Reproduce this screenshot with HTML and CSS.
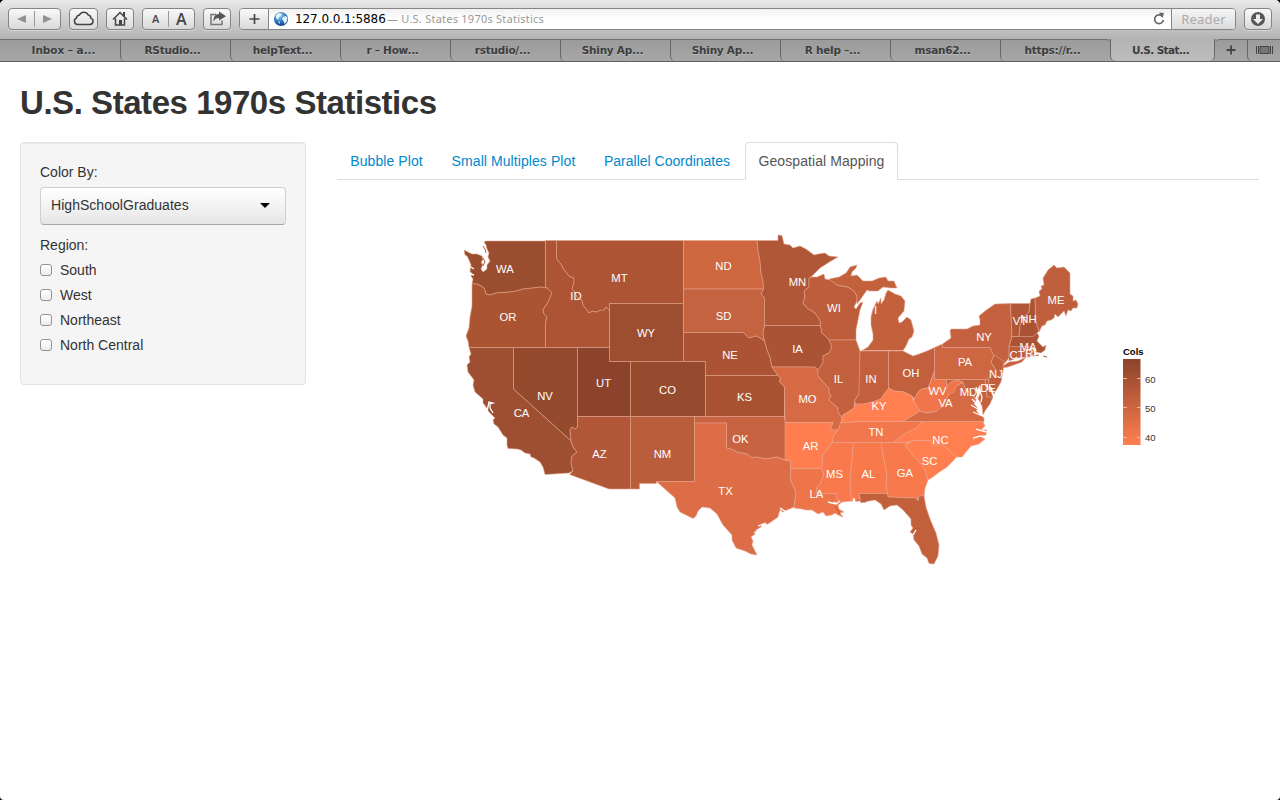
FILE: index.html
```html
<!DOCTYPE html>
<html lang="en">
<head>
<meta charset="utf-8">
<title>U.S. States 1970s Statistics</title>
<link rel="stylesheet" href="styles.css">
</head>
<body>
<div class="window">
  <header class="toolbar">
    <div class="btn nav-btns"><svg width="53" height="22"><path class="dim" d="M9 11l9-4v8zM44 11l-9-4v8z"/><path class="split" d="M26.5 3v16"/></svg></div>
    <div class="btn cloud"><svg width="29" height="22"><path class="line" d="M8.500 16.500H21a3.300 3.300 0 0 0 .8-6.400 3 3 0 0 0-2.600-3.100A4.900 4.900 0 0 0 10.300 7.200 3 3 0 0 0 7.500 10a3.400 3.400 0 0 0 1 6.500z"/></svg></div>
    <div class="btn home"><svg width="28" height="22"><path class="line" d="M7 11.500L14 4.500l7 7M9.500 10.500v6.500h9v-6.500"/><path class="solid" d="M17 4h2v5l-2-2zM13 12h3v5h-3z"/></svg></div>
    <div class="btn sizes"><span class="small-a">A</span><span class="big-a">A</span></div>
    <div class="btn share"><svg width="28" height="22"><path class="line soft" d="M13 6.500H8v10h11v-4"/><path class="solid soft-fill" d="M16 3.500l7 4.700-7 4.300V10c-3 0-4 1-5.500 3.500C10.500 9 12 6 16 6z"/></svg></div>
    <div class="address">
      <div class="add"><svg width="29" height="20"><path d="M14.500 5v10M9.500 10h10" stroke="#444" stroke-width="1.700"/></svg></div>
      <svg class="globe" width="16" height="16" viewBox="0 0 16 16"><defs><radialGradient id="g" cx=".4" cy=".25" r=".8"><stop offset="0" stop-color="#9bcdf2"/><stop offset=".6" stop-color="#2673bd"/><stop offset="1" stop-color="#103e78"/></radialGradient></defs><circle cx="8" cy="8" r="7" fill="url(#g)"/><path d="M3 4l3-2 3 1-1 2-2 1-1 3-2-2zM10 6l3-1 1.500 2-1 4-2 2-1-3-1.500-2zM5 10l2 1-.5 2z" fill="#e3f3fb"/></svg>
      <span class="url">127.0.0.1:5886</span><span class="page-name">— U.S. States 1970s Statistics</span>
      <svg class="reload" width="14" height="16"><path d="M10.500 5.500A4.400 4.400 0 1 0 11.400 9" fill="none" stroke="#666" stroke-width="1.700"/><path d="M7 1.500l5 .5-1.500 5z" fill="#666"/></svg>
      <div class="reader">Reader</div>
    </div>
    <div class="btn down"><svg width="28" height="22"><circle cx="14" cy="11" r="7" fill="#575757"/><path d="M12 6.500h4V11h3l-5 5-5-5h3z" fill="#eee"/></svg></div>
  </header>
  <nav class="tabs">
    <div class="tab first">Inbox – a...</div><div class="tab">RStudio...</div><div class="tab">helpText...</div><div class="tab">r – How...</div><div class="tab">rstudio/...</div><div class="tab">Shiny Ap...</div><div class="tab">Shiny Ap...</div><div class="tab">R help –...</div><div class="tab">msan62...</div><div class="tab before">https://r...</div><div class="tab current">U.S. Stat...</div>
    <div class="tab plus"><svg width="12" height="12"><path d="M6 1.500v9M1.500 6h9" stroke="#444" stroke-width="1.800"/></svg></div>
    <div class="tab all"><svg width="17" height="10"><path d="M.5 1v8M16.500 1v8M2.500 1v8M14.500 1v8" stroke="#444"/><path d="M4 1.500h9v7H4z" fill="#777" stroke="#444"/></svg></div>
  </nav>
  <main class="page">
    <h1>U.S. States 1970s Statistics</h1>
    <div class="row">
      <form class="well">
        <label class="caption">Color By:</label>
        <div class="select"><span>HighSchoolGraduates</span><i class="caret"></i></div>
        <label class="caption">Region:</label>
        <label class="check"><i class="box"></i>South</label>
        <label class="check"><i class="box"></i>West</label>
        <label class="check"><i class="box"></i>Northeast</label>
        <label class="check"><i class="box"></i>North Central</label>
      </form>
      <section class="content">
        <ul class="views"><li class="v1">Bubble Plot</li><li class="v2">Small Multiples Plot</li><li class="v3">Parallel Coordinates</li><li class="v4 active">Geospatial Mapping</li></ul>
        <svg class="map" width="922" height="400" viewBox="337 200 922 400">
          <defs><linearGradient id="scale" x1="0" y1="0" x2="0" y2="1"><stop offset="0" stop-color="#8b432b"/><stop offset="1" stop-color="#ff7f50"/></linearGradient></defs>
          <g class="states">
            <path fill="#9a4d2f" d="M464 250L468 252 472 254 477 254 482 256 483 259 481 263 483 264 481 269 483 272 487 269 487 265 490 261 488 257 489 253 487 249 486 245 484 242 486 241H545.5V286L547 288 541 287 533 288 523 289 516 291 510 292 503 292.500 496 293 490 295 486 294 484 288 481 286 477 284 472 284 473 279 471 276 472 273 470 272 471 265 469 260 467 256 465 255Z"/>
            <path fill="#ab5431" d="M472 284L477 284 481 286 484 288 486 294 490 295 496 293 503 292.500 510 292 516 291 523 289 533 288 541 287 547 288 552 293 550 298 547 304 543 310 544 314 547 317 546 321 545.500 325V347.500H469L468 341 466 336 469 328 470 317 472 306Z"/>
            <path fill="#ad5434" d="M545.5 240.500H556.500V258L559 262 561 264 563 268 569 276 574 278 574 283 572 289 575 292 577 297 582 300 583 305 587 310 589 313 592 311 597 312 600 310 604 310 606 307 609.500 310.500V347.500H545.500V325L546 321 547 317 544 314 543 310 547 304 550 298 552 293 547 288 545.500 286Z"/>
            <path fill="#ad5434" d="M556.500 240.500H683.500V303.500H609.500V310.500L606 307 604 310 600 310 597 312 592 311 589 313 587 310 583 305 582 300 577 297 575 292 572 289 574 283 574 278 569 276 563 268 561 264 559 262 556.500 258Z"/>
            <path fill="#9d4e30" d="M609.500 303.500H683.500V361.500H609.500Z"/>
            <path fill="#8b432b" d="M577.500 347.500H609.500V361.500H630.500V416.500H577.500Z"/>
            <path fill="#964b2f" d="M630.500 361.500H705.500V416.500H630.500Z"/>
            <path fill="#934a2d" d="M513.500 347.500H577.500V427L575 429 572 427 570 430 571 441 513.500 389Z"/>
            <path fill="#9e4f31" d="M469 347.500H513.500V389L571 441 573 447 577 452 572 456 571 463 573 471 569 473 545 474.500 543 467 540 462 534 458 531 457 530 454 525 453 521 450 517 449 508 448.500 507 445 507 438 503 435 498 427 494 424 493 420 495 418 489 412 486 407 483 403 483 399 475 392 473 385 474 380 468 372 467 365 470 362 469 357 471 354Z"/>
            <path fill="#b15738" d="M577.500 416.500H630.500V489H609L569.500 474.500 573 471 571 463 572 456 577 452 573 447 571 441 570 430 572 427 575 429 577.500 427Z"/>
            <path fill="#b95d3b" d="M630.500 416.500H694.500V481.500H656.500V483.500H639.500V489H630.500Z"/>
            <path fill="#ce6740" d="M683.500 240.500H757L758 250 760 261 761 273 763 281 763.500 289H683.500Z"/>
            <path fill="#c4633f" d="M683.500 289H763.500L761 294 764.500 298V325L763 333 764.500 341 760 338 756 336 749 338 743 332.500H683.500Z"/>
            <path fill="#ab5334" d="M683.500 332.500H743L749 338 756 336 760 338 764.500 341 767 350 770 357 772 367 778 375.500H705.500V361.500H683.500Z"/>
            <path fill="#a85231" d="M705.500 375.500H778L781 378 779 381 784.500 387V416.500H705.500Z"/>
            <path fill="#c86341" d="M694.500 416.500H784.500L786 430V460L777 457 771 458 765 459 757 457 752 458 747 454 737 452 731 449 726.500 448V423H694.500Z"/>
            <path fill="#dc6d47" d="M694.500 423H726.500V448L731 449 737 452 747 454 752 458 757 457 765 459 771 458 777 457 785 460 790.500 461V480L796 492 794 507 787 510 782 512 781 508 779 513 778 517 768 524 762 524 761 527 756 530 755 534 751 537 753 541 752 545 757 555 751 554 745 551 736 548 732 540 732 535 723 525 717 514 710 508 702 507 698 511 696 516 693 518.500 680 512 677 507 675 498 666 490 656.500 481.500H694.500Z"/>
            <path fill="#b05737" d="M757 240.500H778V235L782 235.500 784 244 790 245 793 248 800 246 806 249 810 252 814 255 818 254 825 253 829 256 838 257 831 261 820 268 811 277 809 278V287L804 291 805 297 803 303 807 308 815 313 820 320 820.500 325.500H764.500V298L761 294 763.500 289 763 281 761 273 760 261 758 250Z"/>
            <path fill="#aa5435" d="M764.500 325.500H820.500L822 333 829 340 831 344 831.500 348 829 353 823 356 823 363 818 370 815 367H772L770 357 767 350 764.500 341 763 333Z"/>
            <path fill="#d66a45" d="M772 367H815L818 370V376L824 383 829 388 829 393 831 395 829 400 838 408 838 412 842 418 841 423 838 430H830L833 422.500H785L784.500 387 779 381 781 378 778 375.500Z"/>
            <path fill="#bd5d3b" d="M811 277L817 277 824 274 825 279 831 280 837 285 848 287 854 291 857 296 857 301 854 307 856 309 860 303 863 302 860 310 858 320 856 330 856 340H829L822 333 820.500 325.500 820 320 815 313 807 308 803 303 805 297 804 291 809 287V278Z"/>
            <path fill="#c3613d" d="M829 279L839 277 846 273 850 267 857 265 856 268 852 272 851 276 857 275 863 281 872 281 879 278 886 277 888 281 894 281 897 288 891 288 883 287 878 291 869 291 867 290 860 300 857 304 857 296 854 291 848 287 837 285Z"/>
            <path fill="#c3613d" d="M888 290L895 294 901 296 905 301 904 311 898 318 899 323 902 322 907 317 911 320 914 331 912 337 909 339 906 346 903 350.500H862L868 347 873 340 873 334 871 325 871 317 873 309 877 301 878 304 881 298 881 304 884 300 886 293Z"/>
            <path fill="#c3613f" d="M829 340H856L860 351V387L859 394 855 400 854 408 848 412 843 415 842 418 838 412 838 408 829 400 831 395 829 393 829 388 824 383 818 376V370L823 363 823 356 829 353 831.500 348 831 344Z"/>
            <path fill="#c2603d" d="M860 351H888.500V389L884 394 881 399 873 402 864 404 855 404 855 400 859 394Z"/>
            <path fill="#c2603d" d="M888.500 351H903L907 353 913 356 919 354 927 351 934.500 347.500V371L930 383 928 388 922 389 919 391 914 399 912 396 904 392 894 391 888.500 388Z"/>
            <path fill="#ff7f50" d="M843 415L848 412 854 408 855 404 864 404 873 402 881 399 884 394 888.500 388 894 391 904 392 912 396 914 402 920 411 903 421.500H854V422.500H841Z"/>
            <path fill="#f3774d" d="M841 422.500H854V421.500H922L916 428 908 432 900 437 894 442.500H832L834 435 838 430Z"/>
            <path fill="#ff7d4f" d="M785 422.500H833L830 430H838L834 435 832 442 827 450 822 456 823 462 821.500 468.500H790.500V461L785 460Z"/>
            <path fill="#ee744a" d="M790.500 468.500H821.500L824 475 820 484 817 487 816 493.500H836.500L837 500 842 502 838 505 839 509 844 512 840 513 843 517 838 515 835 513 832 515 826 516 823 512 818 514 812 510 806 510 802 509 794 508 796 492 790.500 480Z"/>
            <path fill="#f9794d" d="M832 442.500H853.500L851 470 850 480 851.500 501 842 502 837 500 836.500 493.500H816L817 487 820 484 824 475 821.500 468.500 823 462 822 456 827 450 832 442Z"/>
            <path fill="#f7794c" d="M853.500 442.500H881L884 460 887 475 886 483 887.500 493.500H859L860 500 856 502 854 498 851.500 502 850 480 851 470Z"/>
            <path fill="#f7794c" d="M881 442.500H908L905 445 908 449 914 457 921 464 925 470 928 480 925 488 924 497 919 496 918 501 916 498 888 497 887.500 493.500 886 483 887 475 884 460Z"/>
            <path fill="#c2603c" d="M859 493.500H887.500L888 497 916 498 918 501 919 496 924 496 926 507 930 519 936 533 939 545 938 556 934 564 929 563.500 927 558 922 554 919 546 914 540 913 534 910 532 913 528 911 525 911 519 903 510 897 505 890 506 884 510 881 504 875 500 869 501 861 503Z"/>
            <path fill="#ff7f50" d="M905 445L913 440.500H930L933 445H943L956.500 457 952 462 947 467 938 473 933 477 928 480 925 470 921 464 914 457 908 449Z"/>
            <path fill="#ff7f50" d="M922 421.500H983L985 426 981 430 987 430 986 435 980 436 985 439 979 444 971 446 966 452 962 457 956.500 457 943 445H933L930 440.500H913L908 442.500H894L900 437 908 432 916 428Z"/>
            <path fill="#d66a44" d="M903 421.500H984L984 418 978 413 976 410 979 409 974 404 976 400 971 393 966 390 963 382 956 386 949 394 945 402 937 411 926 413 920 411Z"/>
            <path fill="#f0754a" d="M934.500 371V379.500H946.500V386L951 382 957 380 963 382 956 386 954 392 949 394 945 402 942 407 937 411 926 413 920 411 914 402 914 399 919 391 922 389 928 388 930 383Z"/>
            <path fill="#c4613f" d="M946.500 379.500H985L987 397 993 397 990 404 985 411 983 415 982 406 978 399 981 391 980 385 977 390 977 400 971 393 966 390 963 382 957 380 951 382 946.500 386Z"/>
            <path fill="#ce6641" d="M934.500 347.500L942.500 344V347.500H990L994 355 991 362 996 370 990 379.500H934.500Z"/>
            <path fill="#c4613f" d="M942.500 344L951 338 950 331 951 329 967 329 973 326 980 325 980 320 979 316 985 311 995 304 1010.500 303.500 1012 336 1009 346.500V358L1004 364 994 356 990 347.500H942.500Z"/>
            <path fill="#c4613f" d="M1003 366L1009 362 1018 361 1026 357 1022 362 1008 367 1002 368Z"/>
            <path fill="#c2603d" d="M994 355L1004 361 1003 371 1001 382 997 389 994 394 992 388 988 384 989 378 996 370 991 362Z"/>
            <path fill="#c3613d" d="M985 379.500L988 379 989 386 993 397H987Z"/>
            <path fill="#b05737" d="M1010.500 303.500H1030L1029 312 1023 318 1020 326 1019 336.500H1012Z"/>
            <path fill="#aa5435" d="M1030 303.500L1031 299 1035 298 1036 322 1039 331 1033 337H1019L1020 326 1023 318 1029 312Z"/>
            <path fill="#c05f3d" d="M1035 298L1040 296 1039 291 1042 289 1041 286 1044 285 1043 278 1048 270 1054 265 1057 268 1064 267 1070 273V294L1073 296 1073 301 1076 300 1078 304 1077 308 1073 308 1071 311 1068 310 1066 316 1064 311 1061 314 1058 317 1055 314 1054 318 1051 320 1047 321 1045 325 1042 326 1039 332 1036 322Z"/>
            <path fill="#aa5435" d="M1012 336.500H1033L1037 333 1039 336 1037 341 1043 347 1046 345 1045 350 1041 353 1036 352 1033 347H1009Z"/>
            <path fill="#be5d3c" d="M1009 346.500H1026V357L1017 358 1009 361Z"/>
            <path fill="#d66a44" d="M1026 346.500L1032 347 1035 354 1029 357 1026 357Z"/>
          </g>
          <g class="water"><path d="M479 246l5 2 1 3-5-1zM487 411l2-9 4 1-3 1v4l3 5M471 267l3 2M470 274l4 1M758 526l8-3M754 532l4 2M780 508l5 3M828 502l8 2 4-3M834 502l3 2M976 387l2 7-2 4 4 5-2 5 3 8M972 399l5 5M971 405l7 4M973 412l7 3M979 388l3 9-1 5M987 384l1 6M976 429l7 2 4 1M973 438l7-2 5 1M854 498l1 6M913 535l3-5"/></g>
          <g class="islets"><path d="M483 246l2 3 1 4M483 258l2 4-2 4M1033 356l6-1M1043 356l4 1M835 506l5 8M857 500l9 2"/></g>
          <g class="codes">
            <text x="505" y="273">WA</text><text x="508" y="321">OR</text><text x="576" y="300">ID</text><text x="619.500" y="282">MT</text><text x="646" y="337">WY</text><text x="603.500" y="387">UT</text><text x="545" y="400">NV</text><text x="521.500" y="417">CA</text><text x="599.500" y="458">AZ</text><text x="662.500" y="458">NM</text><text x="667.500" y="394">CO</text><text x="723.500" y="270">ND</text><text x="723.500" y="320">SD</text><text x="730" y="359">NE</text><text x="744.500" y="401">KS</text><text x="740.500" y="443">OK</text><text x="725.500" y="495">TX</text><text x="797.500" y="286">MN</text><text x="797.500" y="353">IA</text><text x="807.500" y="403">MO</text><text x="810.500" y="450">AR</text><text x="816.500" y="498">LA</text><text x="834" y="312">WI</text><text x="875.500" y="314">I</text><text x="838.500" y="383">IL</text><text x="871" y="383">IN</text><text x="911" y="377">OH</text><text x="879" y="410">KY</text><text x="876" y="436">TN</text><text x="834.500" y="478">MS</text><text x="868.500" y="478">AL</text><text x="905" y="477">GA</text><text x="929.500" y="465">SC</text><text x="940.500" y="444">NC</text><text x="945.500" y="407">VA</text><text x="937.500" y="395">WV</text><text x="968.500" y="396">MD</text><text x="988" y="392">DE</text><text x="996" y="378">NJ</text><text x="965" y="366">PA</text><text x="984" y="341">NY</text><text x="1020" y="325">VT</text><text x="1028.500" y="323">NH</text><text x="1056" y="304">ME</text><text x="1028" y="351">MA</text><text x="1017" y="359">CT</text><text x="1031" y="357">RI</text>
          </g>
          <g class="legend">
            <text class="legend-title" x="1123" y="355">Cols</text>
            <rect x="1123" y="359" width="17.500" height="86" fill="url(#scale)"/>
            <path d="M1123 378.500h4M1137 378.500h4M1123 407.500h4M1137 407.500h4M1123 437.500h4M1137 437.500h4"/>
            <text x="1145" y="383">60</text><text x="1145" y="412">50</text><text x="1145" y="441">40</text>
          </g>
        </svg>
      </section>
    </div>
  </main>
</div>
</body>
</html>
```
FILE: styles.css
```css
* { box-sizing: border-box; }
body { margin: 0; background: #000; font: 14px/20px "Liberation Sans", Arial, sans-serif; color: #333; overflow: hidden; }
.window { height: 800px; background: #fff; border-radius: 5px 5px 4px 4px; overflow: hidden; }
.toolbar { height: 39px; display: flex; padding: 8px 8px 0; background: linear-gradient(#e9e9e9, #d6d6d6 35%, #b3b3b3); }
.btn { height: 22px; border: 1px solid #858585; border-radius: 4px; background: linear-gradient(#f9f9f9, #d9d9d9); box-shadow: 0 1px 0 #d8d8d8; overflow: hidden; flex: none; }
.btn svg { display: block; margin: -1px; }
.nav-btns { width: 53px; margin-right: 8px; }
.cloud { width: 29px; margin-right: 8px; }
.home { width: 28px; margin-right: 8px; }
.sizes { width: 53px; margin-right: 8px; display: flex; text-align: center; color: #444; font-family: "Open Sans", sans-serif; line-height: 20px; }
.sizes span { flex: 1; }
.small-a { font-size: 11px; font-weight: 600; background: linear-gradient(#999, #999) 100% 50% / 1px 16px no-repeat; }
.big-a { font-size: 16px; font-weight: 600; }
.share { width: 28px; margin-right: 8px; }
.down { width: 28px; margin-left: 8px; }
.dim { fill: #929292; }
.split { stroke: #9a9a9a; }
.line { fill: none; stroke: #444; stroke-width: 1.5; }
.solid { fill: #444; }
.soft { stroke: #777; }
.soft-fill { fill: #555; }
.address { height: 22px; width: 997px; display: flex; align-items: center; border: 1px solid #858585; border-radius: 4px; background: linear-gradient(#f1f1f1, #fff 50%); font-family: "DejaVu Sans", sans-serif; overflow: hidden; white-space: nowrap; }
.add { width: 29px; height: 20px; border-right: 1px solid #858585; background: linear-gradient(#f9f9f9, #d9d9d9); flex: none; }
.globe { margin: 0 6px 0 4px; flex: none; }
.url { width: 92px; font-size: 12px; letter-spacing: -.08px; color: #000; }
.page-name { font-size: 11px; letter-spacing: .24px; color: #999; font-family: "Noto Sans", sans-serif; flex: 1; }
.reload { margin-right: 5px; }
.reader { width: 64px; height: 20px; border-left: 1px solid #858585; background: linear-gradient(#f5f5f5, #dcdcdc); color: #aaa; text-align: center; font-size: 13px; letter-spacing: .2px; font-family: "Noto Sans", sans-serif; }
.tabs { height: 23px; display: flex; background: #a2a2a2; border-bottom: 1px solid #5f5f5f; }
.tab { width: 110px; height: 22px; border-left: 1px solid #666; border-top: 1px solid #717171; border-bottom-left-radius: 5px; background: linear-gradient(#9b9b9b, #a7a7a7); color: #3d3d3d; font: bold 10.500px/21px "DejaVu Sans", sans-serif; letter-spacing: -.25px; text-align: center; padding-right: 6px; text-shadow: 0 1px 0 #bbb; white-space: nowrap; flex: none; }
.tab.first { width: 120px; border-left: 0; padding: 0 0 0 7px; letter-spacing: -.05px; }
.tab.before { border-top-right-radius: 4px; }
.tab.current { width: 105px; border-top: 0; border-right: 1px solid #666; border-radius: 0 0 5px 5px; background: linear-gradient(#b3b3b3, #bcbcbc); line-height: 23px; padding-right: 4px; letter-spacing: -.6px; }
.tab.plus { width: 32px; border-left: 0; padding: 0; border-top-left-radius: 5px; }
.tab.plus svg { margin-top: 4px; }
.tab.all { width: 33px; padding: 0; }
.tab.all svg { margin-top: 5px; }
.page { padding: 21px 20px 0; }
h1 { margin: 0; height: 59px; font-size: 33px; line-height: 40px; letter-spacing: -.45px; font-weight: bold; white-space: nowrap; }
.row { display: flex; gap: 31px; align-items: flex-start; }
.well { width: 286px; height: 243px; padding: 19px; background: #f5f5f5; border: 1px solid #e3e3e3; border-radius: 4px; box-shadow: inset 0 1px 1px rgba(0,0,0,.05); flex: none; }
.caption { display: block; margin-bottom: 5px; }
.select { height: 38px; display: flex; justify-content: space-between; align-items: center; padding: 0 15px 2px 10px; margin-bottom: 10px; border: 1px solid #d0d0d0; border-bottom-color: #a8a8a8; border-radius: 4px; background: linear-gradient(#fff, #e6e6e6); }
.select span { letter-spacing: .04px; }
.caret { border: 5px solid transparent; border-top-color: #000; border-bottom: 0; }
.check { display: flex; align-items: center; gap: 8px; margin-bottom: 5px; }
.box { width: 12px; height: 12px; border: 1px solid #929292; border-radius: 3px; background: linear-gradient(#fff, #ececec); }
.content { width: 922px; }
.views { display: flex; list-style: none; margin: 0 0 20px; padding: 0; height: 38px; border-bottom: 1px solid #ddd; color: #0088cc; letter-spacing: .08px; }
.views li { height: 38px; padding-top: 9px; text-align: center; white-space: nowrap; }
.v1 { width: 99px; margin-right: 3px; }
.v2 { width: 149px; margin-right: 3px; }
.v3 { width: 152px; margin-right: 2px; letter-spacing: 0; }
.v4 { width: 153px; }
.views .active { color: #555; border: 1px solid #ddd; border-bottom-color: #fff; border-radius: 4px 4px 0 0; background: #fff; padding-top: 8px; }
.map { display: block; font-family: "Liberation Sans", Arial, sans-serif; }
.states path { stroke: #e4a48b; stroke-width: .55; stroke-linejoin: round; }
.water path { fill: none; stroke: #fff; stroke-width: 1.300; }
.islets path { fill: none; stroke: #b95d3b; stroke-width: 1; }
.codes text { fill: #fff; font-size: 11.300px; text-anchor: middle; }
.legend path { stroke: #edb7a2; }
.legend text { font-size: 9.500px; fill: #333; }
.legend .legend-title { font-weight: bold; fill: #000; }
```
